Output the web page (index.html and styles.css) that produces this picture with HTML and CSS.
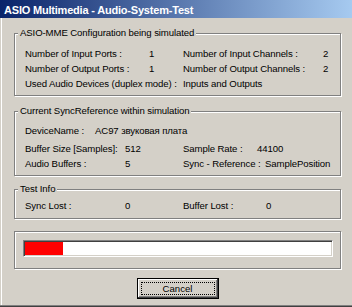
FILE: index.html
```html
<!DOCTYPE html>
<html>
<head>
<meta charset="utf-8">
<link rel="stylesheet" href="styles.css">
</head>
<body>
<div class="window">
  <div class="titlebar">ASIO Multimedia - Audio-System-Test</div>
  <div class="client">
    <fieldset class="group g1">
      <legend>ASIO-MME Configuration being simulated</legend>
      <div class="rows">
        <span>Number of Input Ports :</span><span>1</span><span>Number of Input Channels :</span><span>2</span>
        <span>Number of Output Ports :</span><span>1</span><span>Number of Output Channels :</span><span>2</span>
        <span class="span2">Used Audio Devices (duplex mode) :</span><span class="span2">Inputs and Outputs</span>
      </div>
    </fieldset>
    <fieldset class="group g2">
      <legend>Current SyncReference within simulation</legend>
      <div class="rows device">
        <span>DeviceName :</span><span>AC97 звуковая плата</span>
      </div>
      <div class="rows">
        <span>Buffer Size [Samples]:</span><span>512</span><span>Sample Rate :</span><span>44100</span>
        <span>Audio Buffers :</span><span>5</span><span>Sync - Reference :</span><span class="shift">SamplePosition</span>
      </div>
    </fieldset>
    <fieldset class="group g3">
      <legend>Test Info</legend>
      <div class="rows">
        <span>Sync Lost :</span><span>0</span><span>Buffer Lost :</span><span>0</span>
      </div>
    </fieldset>
    <div class="group g4">
      <div class="progress"><div class="fill" style="width:12.4%"></div></div>
    </div>
    <div class="footer">
      <button class="btn"><span class="focus">Cancel</span></button>
    </div>
  </div>
</div>
</body>
</html>
```

FILE: styles.css
```css
* { box-sizing: border-box; }
html, body { margin: 0; padding: 0; }
body {
  background: #d4d0c8;
  font-family: "Liberation Sans", Arial, sans-serif;
  font-size: 9.6px;
  letter-spacing: -0.1px;
  color: #000;
}
.window {
  width: 352px;
  height: 307px;
  display: flex;
  flex-direction: column;
  background: #d4d0c8;
  overflow: hidden;
  box-shadow: inset 0 -1px #404040, inset 0 -2px #808080, inset 1px 0 #d4d0c8, inset 2px 0 #fff;
}
.titlebar {
  height: 18px;
  padding: 2px 0 0 4px;
  line-height: 16px;
  font-size: 11px;
  font-weight: bold;
  letter-spacing: -0.2px;
  color: #fff;
  white-space: nowrap;
  background: linear-gradient(to right, #0a246a, #a6caf0);
}
.client {
  display: flex;
  flex-direction: column;
  padding: 9px 0 0 14px;
}
.group {
  width: 327px;
  min-width: 0;
  margin: 0;
  padding: 0 0 4px 3px;
  border: 1px solid #808080;
  box-shadow: inset 1px 1px #fff, 1px 1px #fff;
}
legend {
  padding: 0 2px;
  line-height: 12px;
  background: #d4d0c8;
}
.rows {
  display: grid;
  margin-left: 7px;
  line-height: 15px;
  white-space: nowrap;
}
.span2 { grid-column: span 2; }
.g1 { padding-top: 7px; }
.g1 .rows { grid-template-columns: 124px 34px 140px 1fr; }
.g2 { margin-top: 9px; padding-top: 6px; }
.g2 .rows { grid-template-columns: 100px 58px 74px 1fr; }
.g2 .rows.device { grid-template-columns: 70px 1fr; margin-bottom: 3px; }
.shift { margin-left: 8px; }
.g3 { margin-top: 7px; padding-top: 3px; padding-bottom: 5px; }
.g3 .rows { grid-template-columns: 100px 58px 83px 1fr; }
.g4 {
  margin-top: 12px;
  padding: 8px 0 11px 8px;
}
.progress {
  width: 310px;
  height: 17px;
  padding: 1px;
  border: 1px solid;
  border-color: #808080 #fff #fff #808080;
  box-shadow: inset 1px 1px #404040, inset -1px -1px #d4d0c8;
  background: #fff;
}
.fill {
  height: 100%;
  background: #ff0000;
}
.footer {
  width: 327px;
  display: flex;
  justify-content: center;
  margin-top: 9px;
}
.btn {
  width: 82px;
  height: 21px;
  display: flex;
  padding: 3px;
  margin: 0;
  border: 1px solid #000;
  background: #d4d0c8;
  box-shadow: inset -1px -1px #404040, inset 1px 1px #fff, inset -2px -2px #808080;
  font: inherit;
  color: #000;
}
.focus {
  flex: 1;
  display: flex;
  align-items: center;
  justify-content: center;
  border: 1px dotted #000;
  line-height: 11px;
}
```
